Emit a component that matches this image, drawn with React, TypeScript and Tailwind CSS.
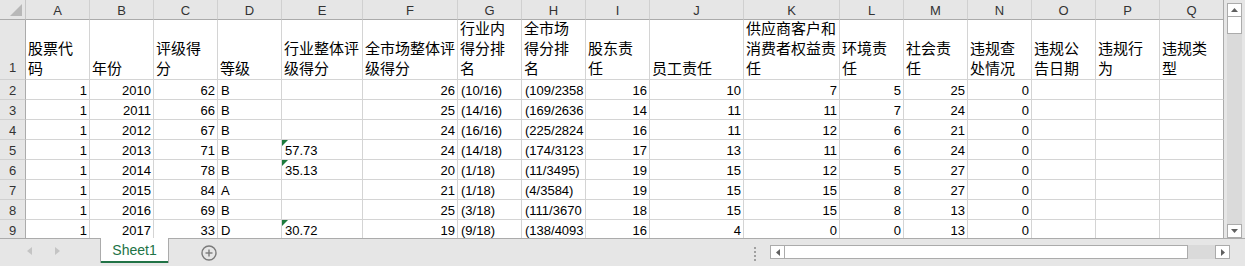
import React from "react";

// 列字母
const colLetters = ["A", "B", "C", "D", "E", "F", "G", "H", "I", "J", "K", "L", "M", "N", "O", "P", "Q"];

// 表头（第 1 行），按 Excel 的自动换行手动断行
const headers: string[][] = [
  ["股票代", "码"],
  ["年份"],
  ["评级得", "分"],
  ["等级"],
  ["行业整体评", "级得分"],
  ["全市场整体评", "级得分"],
  ["行业内", "得分排", "名"],
  ["全市场", "得分排", "名"],
  ["股东责", "任"],
  ["员工责任"],
  ["供应商客户和", "消费者权益责", "任"],
  ["环境责", "任"],
  ["社会责", "任"],
  ["违规查", "处情况"],
  ["违规公", "告日期"],
  ["违规行", "为"],
  ["违规类", "型"],
];

// 右对齐的数值列
const numeric = [true, true, true, false, false, true, false, false, true, true, true, true, true, true, false, false, false];

// H 列在单元格宽度处被截断，按画面显示的内容写
const rows: string[][] = [
  ["1", "2010", "62", "B", "", "26", "(10/16)", "(109/2358", "16", "10", "7", "5", "25", "0", "", "", ""],
  ["1", "2011", "66", "B", "", "25", "(14/16)", "(169/2636", "14", "11", "11", "7", "24", "0", "", "", ""],
  ["1", "2012", "67", "B", "", "24", "(16/16)", "(225/2824", "16", "11", "12", "6", "21", "0", "", "", ""],
  ["1", "2013", "71", "B", "57.73", "24", "(14/18)", "(174/3123", "17", "13", "11", "6", "24", "0", "", "", ""],
  ["1", "2014", "78", "B", "35.13", "20", "(1/18)", "(11/3495)", "19", "15", "12", "5", "27", "0", "", "", ""],
  ["1", "2015", "84", "A", "", "21", "(1/18)", "(4/3584)", "19", "15", "15", "8", "27", "0", "", "", ""],
  ["1", "2016", "69", "B", "", "25", "(3/18)", "(111/3670", "18", "15", "15", "8", "13", "0", "", "", ""],
  ["1", "2017", "33", "D", "30.72", "19", "(9/18)", "(138/4093", "16", "4", "0", "0", "13", "0", "", "", ""],
];

function Grid() {
  return (
    <div className="grid w-[1224px] grid-cols-[26px_64px_64px_64px_64px_81px_95px_64px_64px_64px_94px_96px_64px_64px_64px_64px_64px_64px] grid-rows-[20px_60px_repeat(8,20px)] bg-white">
      {/* 左上角 */}
      <div className="relative border-r border-b border-r-[#c6c6c6] border-b-[#ababab] bg-[#e6e6e6]">
        <svg className="absolute left-[10px] top-[4px]" width="12" height="12" viewBox="0 0 12 12">
          <polygon points="12,0 12,12 0,12" fill="#b8b8b8" />
        </svg>
      </div>
      {colLetters.map((c, i) => (
        <div
          key={c}
          className={[
            "flex justify-center border-b border-r border-b-[#ababab] bg-[#e6e6e6] pt-[1px] text-[13px] leading-[20px] text-[#333]",
            i === colLetters.length - 1 ? "border-r-[#ababab]" : "border-r-[#d0d0d0]",
          ].join(" ")}
        >
          {c}
        </div>
      ))}

      {/* 第 1 行：表头 */}
      <div className="flex items-end justify-center border-r border-b border-r-[#ababab] border-b-[#d0d0d0] bg-[#e6e6e6] text-[13px] leading-[22px] text-[#333]">
        1
      </div>
      {headers.map((lines, i) => (
        <div
          key={i}
          className={[
            "flex flex-col justify-end overflow-hidden whitespace-nowrap border-r border-b border-b-[#d4d4d4] pl-[2px] text-[15px] leading-[20px] text-black",
            i === headers.length - 1 ? "border-r-[#ababab]" : "border-r-[#d4d4d4]",
          ].join(" ")}
        >
          {lines.map((l) => (
            <div key={l}>{l}</div>
          ))}
        </div>
      ))}

      {/* 数据行 */}
      {rows.map((r, ri) => (
        <React.Fragment key={ri}>
          <div className="flex justify-center overflow-hidden border-r border-b border-r-[#ababab] border-b-[#d0d0d0] bg-[#e6e6e6] text-[13px] leading-[22px] text-[#333]">
            {ri + 2}
          </div>
          {r.map((v, ci) => (
            <div
              key={ci}
              className={[
                "relative overflow-hidden whitespace-nowrap border-r border-b border-b-[#d4d4d4] text-[13px] leading-[22px] text-black",
                numeric[ci] ? "pr-[2px] text-right" : "pl-[3px] text-left",
                ci === r.length - 1 ? "border-r-[#ababab]" : "border-r-[#d4d4d4]",
              ].join(" ")}
            >
              {ci === 4 && v !== "" && (
                <svg className="absolute left-0 top-0" width="6" height="6" viewBox="0 0 6 6">
                  <polygon points="0,0 6,0 0,6" fill="#1e7b3c" />
                </svg>
              )}
              {v}
            </div>
          ))}
        </React.Fragment>
      ))}
    </div>
  );
}

function VScroll() {
  return (
    <div className="flex h-full w-[21px] flex-col bg-[#e6e6e6] pl-[3px] pr-[3px] pt-[3px]">
      <div className="flex h-[14px] w-[15px] items-center justify-center border border-[#ababab] bg-white">
        <svg width="7" height="4" viewBox="0 0 7 4">
          <polygon points="3.5,0 7,4 0,4" fill="#606060" />
        </svg>
      </div>
      <div className="h-[17px] w-[15px] border border-t-0 border-[#ababab] bg-white" />
      <div className="w-[15px] flex-1 bg-[#dadada]" />
      <div className="flex h-[14px] w-[15px] items-center justify-center border border-[#ababab] bg-white">
        <svg width="7" height="4" viewBox="0 0 7 4">
          <polygon points="0,0 7,0 3.5,4" fill="#606060" />
        </svg>
      </div>
    </div>
  );
}

function BottomBar() {
  return (
    <div className="flex h-[28px] items-start border-t border-[#ababab] bg-[#e6e6e6]">
      {/* 工作表导航箭头 */}
      <div className="flex h-[24px] w-[100px] items-center gap-[23px] pl-[27px]">
        <svg width="5" height="8" viewBox="0 0 5 8">
          <polygon points="5,0 5,8 0,4" fill="#c4c4c4" />
        </svg>
        <svg width="5" height="8" viewBox="0 0 5 8">
          <polygon points="0,0 0,8 5,4" fill="#c4c4c4" />
        </svg>
      </div>
      {/* 当前工作表标签 */}
      <div className="-mt-px flex h-[25px] w-[69px] flex-col border-x border-[#ababab] bg-white">
        <div className="flex flex-1 items-center justify-center pt-[1px] text-[14px] text-[#217346]">Sheet1</div>
        <div className="h-[2px] bg-[#217346]" />
      </div>
      {/* 新建工作表 */}
      <div className="ml-[32px] mt-[6px] flex h-[16px] w-[16px] items-center justify-center">
        <svg width="16" height="16" viewBox="0 0 16 16" fill="none" stroke="#7a7a7a" strokeWidth="1.4">
          <circle cx="8" cy="8" r="7" />
          <line x1="8" y1="4.5" x2="8" y2="11.5" />
          <line x1="4.5" y1="8" x2="11.5" y2="8" />
        </svg>
      </div>
      {/* 分隔点 */}
      <div className="ml-[537px] mt-[8px] flex flex-col gap-[2px]">
        <div className="h-[2px] w-[2px] bg-[#a0a0a0]" />
        <div className="h-[2px] w-[2px] bg-[#a0a0a0]" />
        <div className="h-[2px] w-[2px] bg-[#a0a0a0]" />
        <div className="h-[2px] w-[2px] bg-[#a0a0a0]" />
      </div>
      {/* 水平滚动条 */}
      <div className="ml-[14px] mt-[6px] flex h-[14px]">
        <div className="flex w-[15px] items-center justify-center border border-[#ababab] bg-white">
          <svg width="4" height="7" viewBox="0 0 4 7">
            <polygon points="4,0 4,7 0,3.5" fill="#606060" />
          </svg>
        </div>
        <div className="w-[403px] border border-l-0 border-[#ababab] bg-white" />
        <div className="w-[27px] bg-[#dadada]" />
        <div className="flex w-[15px] items-center justify-center border border-[#ababab] bg-white">
          <svg width="4" height="7" viewBox="0 0 4 7">
            <polygon points="0,0 0,7 4,3.5" fill="#606060" />
          </svg>
        </div>
      </div>
    </div>
  );
}

export default function App() {
  return (
    <div className="flex h-[266px] w-[1245px] flex-col overflow-hidden bg-[#e6e6e6] font-['Liberation_Sans','Noto_Sans_CJK_SC',sans-serif]">
      <div className="flex h-[238px] overflow-hidden">
        <div className="h-[238px] w-[1224px] overflow-hidden">
          <Grid />
        </div>
        <VScroll />
      </div>
      <BottomBar />
    </div>
  );
}
